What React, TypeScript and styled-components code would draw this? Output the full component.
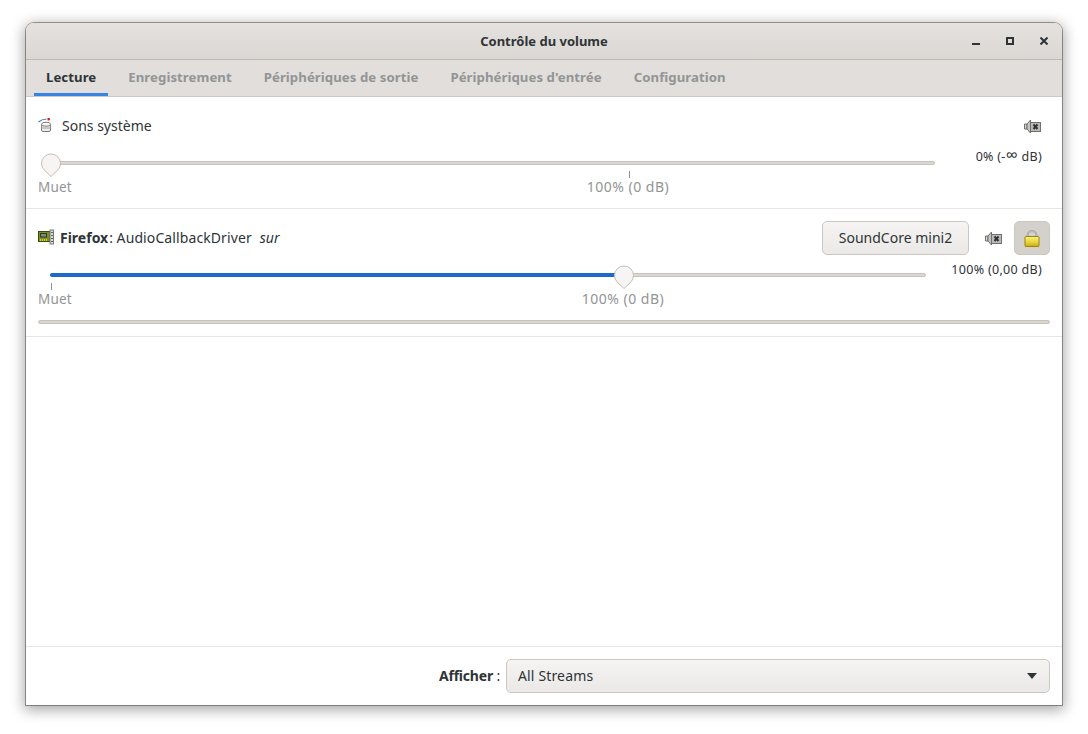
import styled, { createGlobalStyle } from "styled-components";

const tabs = ["Lecture", "Enregistrement", "Périphériques de sortie", "Périphériques d'entrée", "Configuration"];

const GlobalStyle = createGlobalStyle`
  html, body {
    margin: 0;
    padding: 0;
    background: #ffffff;
  }
  body {
    font-family: "Noto Sans", "Open Sans", sans-serif;
    font-size: 14px;
    color: #2e3436;
  }
`;

const Page = styled.div`
  width: 1088px;
  height: 734px;
  padding: 23px 26px 29px;
  box-sizing: border-box;
  overflow: hidden;
`;

const Window = styled.div`
  height: 100%;
  display: flex;
  flex-direction: column;
  background: #ffffff;
  border-radius: 8px 8px 0 0;
  box-shadow: 0 0 0 1px rgba(0, 0, 0, 0.35), 0 3px 14px 2px rgba(0, 0, 0, 0.35);
`;

const TitleBar = styled.header`
  height: 36px;
  flex: none;
  display: flex;
  align-items: center;
  justify-content: center;
  position: relative;
  background: linear-gradient(#e5e1de, #dbd8d4);
  border-bottom: 1px solid #bfb8b1;
  border-radius: 8px 8px 0 0;
  font-weight: 700;
  font-size: 13px;
`;

const WindowTitle = styled.span`
  padding-bottom: 1px;
`;

const WindowButtons = styled.div`
  position: absolute;
  right: 14px;
  top: 14px;
  display: flex;
  gap: 26px;
`;

const WindowIcon = styled.svg`
  width: 8px;
  height: 8px;
  display: block;
  fill: none;
  stroke: #2e3436;
  stroke-width: 2;
`;

const TabBar = styled.nav`
  height: 36px;
  flex: none;
  display: flex;
  gap: 8px;
  padding: 0 8px;
  background: #e1dedb;
  border-bottom: 1px solid #cdc7c2;
`;

const Tab = styled.div<{ $active?: boolean }>`
  display: flex;
  align-items: center;
  padding: 0 12px 2px;
  font-weight: 700;
  font-size: 13.2px;
  letter-spacing: 0.06px;
  color: ${(p) => (p.$active ? "#2e3436" : "#929595")};
  box-shadow: ${(p) => (p.$active ? "inset 0 -3px 0 #3584e4" : "none")};
`;

const Row = styled.section`
  flex: none;
  padding: 12px 12px 8px;
  border-bottom: 1px solid #e8e6e4;
`;

const StreamRow = styled(Row)`
  padding-bottom: 12px;
`;

const RowHead = styled.div`
  height: 34px;
  display: flex;
  align-items: center;
`;

const AppName = styled.div<{ $gap: number }>`
  flex: 1;
  display: flex;
  align-items: center;
  gap: ${(p) => p.$gap}px;
  padding-bottom: 2px;
  white-space: pre;
`;

const Colon = styled.span`
  margin-left: 1px;
`;

const Detail = styled.span`
  letter-spacing: 0.1px;
`;

const Italic = styled.em`
  font-style: italic;
  margin-left: 8px;
`;

const Controls = styled.div`
  display: flex;
  align-items: center;
  gap: 3px;
`;

const DeviceButton = styled.button`
  width: 147px;
  height: 34px;
  margin-right: 3px;
  padding: 0 0 2px;
  font: inherit;
  color: inherit;
  background: linear-gradient(#f5f4f2, #ebe9e7);
  border: 1px solid #cdc7c2;
  border-radius: 5px;
`;

const MuteSlot = styled.div`
  width: 36px;
  height: 34px;
  display: flex;
  align-items: center;
  justify-content: center;
`;

const LockButton = styled.div`
  width: 36px;
  height: 34px;
  box-sizing: border-box;
  display: flex;
  align-items: center;
  justify-content: center;
  background: #d4d0cc;
  border: 1px solid #cdc7c2;
  border-radius: 5px;
`;

const SliderLine = styled.div`
  display: flex;
  justify-content: space-between;
  align-items: flex-start;
`;

const SliderBox = styled.div<{ $width: number; $inset: number }>`
  width: ${(p) => p.$width}px;
  padding: 18px 0 0 ${(p) => p.$inset}px;
  box-sizing: border-box;
  position: relative;
`;

const Track = styled.div`
  height: 4px;
  box-sizing: border-box;
  position: relative;
  background: #dad6d2;
  border: 1px solid #c8c2bc;
  border-radius: 2px;
`;

const TrackFill = styled.div`
  position: absolute;
  left: -1px;
  top: -1px;
  bottom: -1px;
  background: #1b6acb;
  border-radius: 2px 0 0 2px;
`;

const Thumb = styled.svg`
  position: absolute;
  top: -9px;
  width: 20px;
  height: 24px;
  margin-left: -10px;
`;

const Marks = styled.div`
  height: 35px;
  position: relative;
`;

const Tick = styled.span`
  position: absolute;
  top: 6px;
  width: 1px;
  height: 7px;
  background: #8f9191;
`;

const MarkLabel = styled.span`
  position: absolute;
  top: 14px;
  line-height: 16px;
  font-size: 14px;
  letter-spacing: 0.5px;
  color: #929595;
  white-space: nowrap;
  transform: translateX(-50%);
`;

const MuteLabel = styled.span<{ $inset: number }>`
  position: absolute;
  top: 14px;
  left: ${(p) => -p.$inset}px;
  line-height: 16px;
  font-size: 13.5px;
  letter-spacing: 0.2px;
  color: #929595;
`;

const VolumeText = styled.div<{ $top: number }>`
  margin: ${(p) => p.$top}px 8px 0 0;
  height: 16px;
  line-height: 16px;
  font-size: 12.5px;
  letter-spacing: 0.3px;
  white-space: nowrap;
`;

const InfinityMark = styled.span`
  font-size: 17px;
  line-height: 0;
`;

const LevelBar = styled.div`
  height: 4px;
  margin-top: 8px;
  box-sizing: border-box;
  background: #dad6d2;
  border: 1px solid #c8c2bc;
  border-radius: 2px;
`;

const Spacer = styled.div`
  flex: 1;
`;

const Footer = styled.footer`
  height: 59px;
  flex: none;
  box-sizing: border-box;
  display: flex;
  align-items: center;
  justify-content: flex-end;
  gap: 6px;
  padding: 0 12px;
  border-top: 1px solid #e8e6e4;
`;

const FooterLabel = styled.span`
  padding-bottom: 2px;
  letter-spacing: -0.2px;
  white-space: pre;
`;

const Bold = styled.b`
  font-weight: 700;
`;

const Combo = styled.div`
  width: 544px;
  height: 34px;
  box-sizing: border-box;
  display: flex;
  align-items: center;
  justify-content: space-between;
  padding: 0 12px 2px 11px;
  letter-spacing: 0.15px;
  background: linear-gradient(#f5f4f2, #ebe9e7);
  border: 1px solid #cdc7c2;
  border-radius: 5px;
`;

const ComboArrow = styled.svg`
  width: 10px;
  height: 6px;
  margin-top: 2px;
  fill: #2e3436;
`;

function SpeakerMuted() {
  return (
    <svg width="17" height="15" viewBox="0 0 17 15">
      <path d="M0.5 5h2.5v5H0.5z" fill="#d8d8d4" stroke="#6f716d" />
      <path d="M3 5l3.5-4v13L3 10z" fill="#c4c5c0" stroke="#6f716d" />
      <rect x="6.5" y="3.5" width="10" height="9" fill="#b9bab5" stroke="#6f716d" />
      <path d="M9.5 5.5l4 4.5M13.5 5.5l-4 4.5" stroke="#2e3436" strokeWidth="2" />
    </svg>
  );
}

function SystemSoundIcon() {
  return (
    <svg width="14" height="14" viewBox="0 0 14 14">
      <path d="M0.5 4C2.5 2.2 5 1.2 8.5 1" fill="none" stroke="#4a7fb5" strokeWidth="1.2" />
      <rect x="9.5" y="0" width="2.4" height="2.4" fill="#d61f1f" />
      <path d="M3.5 6.5h9v5.5a1.5 1.5 0 0 1-1.5 1.5H5A1.5 1.5 0 0 1 3.5 12z" fill="#ecebe9" stroke="#7d7f7b" />
      <ellipse cx="8" cy="6.2" rx="4.5" ry="2" fill="#fbfbfa" stroke="#7d7f7b" />
      <path d="M3.5 10h9" stroke="#a3a4a0" />
    </svg>
  );
}

function SoundCardIcon() {
  return (
    <svg width="16" height="16" viewBox="0 0 16 16">
      <rect x="0.5" y="2.5" width="11.5" height="10" fill="#7f8f1e" stroke="#3d4a0c" />
      <rect x="2.5" y="4.5" width="6" height="3.5" fill="#7c8c86" stroke="#2f3a34" />
      <path d="M2 11h8" stroke="#d8d42a" strokeWidth="2" strokeDasharray="1 1" />
      <rect x="12" y="1" width="3.5" height="14" fill="#d9d9d6" stroke="#7b7c78" />
      <path d="M13 3.5h2M13 6.5h2M13 9.5h2M13 12.5h2" stroke="#5f605c" />
    </svg>
  );
}

function LockIcon() {
  return (
    <svg width="16" height="17" viewBox="0 0 16 17">
      <defs>
        <linearGradient id="lockBody" x1="0" y1="0" x2="0" y2="1">
          <stop offset="0" stopColor="#f7ee8c" />
          <stop offset="0.5" stopColor="#ecd93f" />
          <stop offset="1" stopColor="#c9ab14" />
        </linearGradient>
      </defs>
      <path d="M3.6 8V5.5a4.4 4.4 0 0 1 8.8 0V8" fill="none" stroke="#97968f" strokeWidth="2" />
      <path d="M3.6 7V5.5a4.4 4.4 0 0 1 8.8 0V7" fill="none" stroke="#e9e7e3" strokeWidth="0.6" />
      <rect x="1" y="6.5" width="14" height="10" rx="0.8" fill="url(#lockBody)" stroke="#9c8608" />
    </svg>
  );
}

function SliderThumb({ left }: { left: number }) {
  return (
    <Thumb viewBox="0 0 20 24" style={{ left }}>
      <path
        d="M10 23.5L2.6 16.4A9.5 9.5 0 1 1 17.4 16.4z"
        fill="#f6f5f3"
        stroke="#c4bdb7"
      />
    </Thumb>
  );
}

export default function App() {
  return (
    <Page>
      <GlobalStyle />
      <Window>
        <TitleBar>
          <WindowTitle>Contrôle du volume</WindowTitle>
          <WindowButtons>
            <WindowIcon viewBox="0 0 8 8">
              <path d="M0 7h8" />
            </WindowIcon>
            <WindowIcon viewBox="0 0 8 8">
              <rect x="1" y="1" width="6" height="6" />
            </WindowIcon>
            <WindowIcon viewBox="0 0 8 8">
              <path d="M0.5 0.5l7 7M7.5 0.5l-7 7" />
            </WindowIcon>
          </WindowButtons>
        </TitleBar>
        <TabBar>
          {tabs.map((t, i) => (
            <Tab key={t} $active={i === 0}>
              {t}
            </Tab>
          ))}
        </TabBar>

        <Row>
          <RowHead>
            <AppName $gap={10}>
              <SystemSoundIcon />
              Sons système
            </AppName>
            <Controls>
              <MuteSlot>
                <SpeakerMuted />
              </MuteSlot>
            </Controls>
          </RowHead>
          <SliderLine>
            <SliderBox $width={897} $inset={13}>
              <Track>
                <SliderThumb left={-1} />
              </Track>
              <Marks>
                <MuteLabel $inset={13}>Muet</MuteLabel>
                <Tick style={{ left: 578 }} />
                <MarkLabel style={{ left: 577 }}>100% (0 dB)</MarkLabel>
              </Marks>
            </SliderBox>
            <VolumeText $top={6}>
              0% (-<InfinityMark>∞</InfinityMark> dB)
            </VolumeText>
          </SliderLine>
        </Row>

        <StreamRow>
          <RowHead>
            <AppName $gap={6}>
              <SoundCardIcon />
              <span>
                <Bold>Firefox</Bold>
                <Colon>:</Colon> <Detail>AudioCallbackDriver</Detail>
                <Italic>sur</Italic>
              </span>
            </AppName>
            <Controls>
              <DeviceButton>SoundCore mini2</DeviceButton>
              <MuteSlot>
                <SpeakerMuted />
              </MuteSlot>
              <LockButton>
                <LockIcon />
              </LockButton>
            </Controls>
          </RowHead>
          <SliderLine>
            <SliderBox $width={888} $inset={12}>
              <Track>
                <TrackFill style={{ width: 566 }} />
                <SliderThumb left={573} />
              </Track>
              <Marks>
                <MuteLabel $inset={12}>Muet</MuteLabel>
                <Tick style={{ left: 1 }} />
                <MarkLabel style={{ left: 573 }}>100% (0 dB)</MarkLabel>
              </Marks>
            </SliderBox>
            <VolumeText $top={7}>100% (0,00 dB)</VolumeText>
          </SliderLine>
          <LevelBar />
        </StreamRow>

        <Spacer />

        <Footer>
          <FooterLabel>
            <Bold>Afficher</Bold> :
          </FooterLabel>
          <Combo>
            All Streams
            <ComboArrow viewBox="0 0 10 6">
              <path d="M0 0h10L5 6z" />
            </ComboArrow>
          </Combo>
        </Footer>
      </Window>
    </Page>
  );
}
